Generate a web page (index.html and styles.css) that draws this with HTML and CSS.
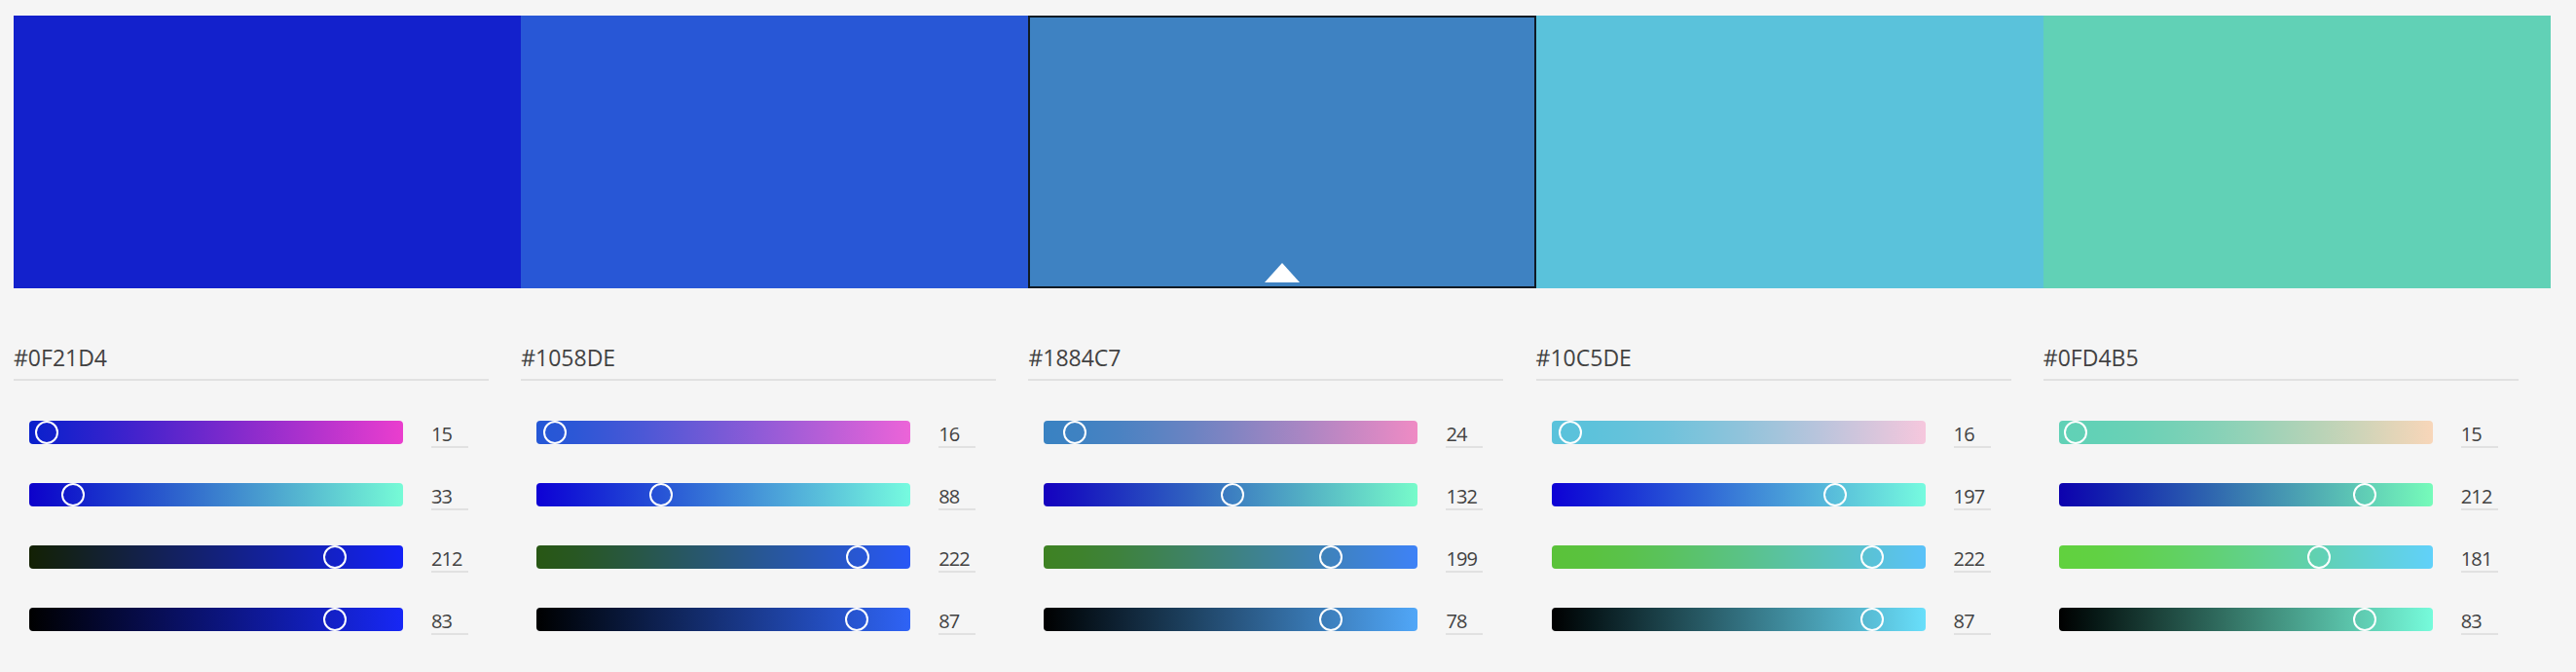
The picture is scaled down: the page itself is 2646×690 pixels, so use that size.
FILE: index.html
```html
<!DOCTYPE html>
<html lang="en">
<head>
<meta charset="utf-8">
<title>Color Wheel</title>
<link rel="stylesheet" href="styles.css">
</head>
<body>
<div class="app">
  <div class="swatches">
    <div class="swatch" data-rgb="15,33,212"></div>
    <div class="swatch" data-rgb="16,88,222"></div>
    <div class="swatch is-active" data-rgb="24,132,199"><span class="caret"></span></div>
    <div class="swatch" data-rgb="16,197,222"></div>
    <div class="swatch" data-rgb="15,212,181"></div>
  </div>

  <div class="editors">
    <div class="editor">
      <div class="hex">#0F21D4</div>
      <div class="sliders">
        <div class="slider-row">
          <div class="track" data-from="0,33,212" data-to="255,33,212"><span class="thumb" style="--f:0.0588"></span></div>
          <div class="num">15</div>
        </div>
        <div class="slider-row">
          <div class="track" data-from="15,0,212" data-to="15,255,212"><span class="thumb" style="--f:0.1294"></span></div>
          <div class="num">33</div>
        </div>
        <div class="slider-row">
          <div class="track" data-from="15,33,0" data-to="15,33,255"><span class="thumb" style="--f:0.8314"></span></div>
          <div class="num">212</div>
        </div>
        <div class="slider-row">
          <div class="track" data-from="0,0,0" data-to="18,40,255"><span class="thumb" style="--f:0.83"></span></div>
          <div class="num">83</div>
        </div>
      </div>
    </div>

    <div class="editor">
      <div class="hex">#1058DE</div>
      <div class="sliders">
        <div class="slider-row">
          <div class="track" data-from="0,88,222" data-to="255,88,222"><span class="thumb" style="--f:0.0627"></span></div>
          <div class="num">16</div>
        </div>
        <div class="slider-row">
          <div class="track" data-from="16,0,222" data-to="16,255,222"><span class="thumb" style="--f:0.3451"></span></div>
          <div class="num">88</div>
        </div>
        <div class="slider-row">
          <div class="track" data-from="16,88,0" data-to="16,88,255"><span class="thumb" style="--f:0.8706"></span></div>
          <div class="num">222</div>
        </div>
        <div class="slider-row">
          <div class="track" data-from="0,0,0" data-to="18,101,255"><span class="thumb" style="--f:0.87"></span></div>
          <div class="num">87</div>
        </div>
      </div>
    </div>

    <div class="editor">
      <div class="hex">#1884C7</div>
      <div class="sliders">
        <div class="slider-row">
          <div class="track" data-from="0,132,199" data-to="255,132,199"><span class="thumb" style="--f:0.0941"></span></div>
          <div class="num">24</div>
        </div>
        <div class="slider-row">
          <div class="track" data-from="24,0,199" data-to="24,255,199"><span class="thumb" style="--f:0.5176"></span></div>
          <div class="num">132</div>
        </div>
        <div class="slider-row">
          <div class="track" data-from="24,132,0" data-to="24,132,255"><span class="thumb" style="--f:0.7804"></span></div>
          <div class="num">199</div>
        </div>
        <div class="slider-row">
          <div class="track" data-from="0,0,0" data-to="31,169,255"><span class="thumb" style="--f:0.78"></span></div>
          <div class="num">78</div>
        </div>
      </div>
    </div>

    <div class="editor">
      <div class="hex">#10C5DE</div>
      <div class="sliders">
        <div class="slider-row">
          <div class="track" data-from="0,197,222" data-to="255,197,222"><span class="thumb" style="--f:0.0627"></span></div>
          <div class="num">16</div>
        </div>
        <div class="slider-row">
          <div class="track" data-from="16,0,222" data-to="16,255,222"><span class="thumb" style="--f:0.7725"></span></div>
          <div class="num">197</div>
        </div>
        <div class="slider-row">
          <div class="track" data-from="16,197,0" data-to="16,197,255"><span class="thumb" style="--f:0.8706"></span></div>
          <div class="num">222</div>
        </div>
        <div class="slider-row">
          <div class="track" data-from="0,0,0" data-to="18,226,255"><span class="thumb" style="--f:0.87"></span></div>
          <div class="num">87</div>
        </div>
      </div>
    </div>

    <div class="editor">
      <div class="hex">#0FD4B5</div>
      <div class="sliders">
        <div class="slider-row">
          <div class="track" data-from="0,212,181" data-to="255,212,181"><span class="thumb" style="--f:0.0588"></span></div>
          <div class="num">15</div>
        </div>
        <div class="slider-row">
          <div class="track" data-from="15,0,181" data-to="15,255,181"><span class="thumb" style="--f:0.8314"></span></div>
          <div class="num">212</div>
        </div>
        <div class="slider-row">
          <div class="track" data-from="15,212,0" data-to="15,212,255"><span class="thumb" style="--f:0.7098"></span></div>
          <div class="num">181</div>
        </div>
        <div class="slider-row">
          <div class="track" data-from="0,0,0" data-to="18,255,218"><span class="thumb" style="--f:0.83"></span></div>
          <div class="num">83</div>
        </div>
      </div>
    </div>
  </div>
</div>
<script src="app.js"></script>
</body>
</html>
```

FILE: styles.css
```css
* { box-sizing: border-box; }

body {
  margin: 0;
  background: #f5f5f5;
  font-family: "Open Sans", "Noto Sans", sans-serif;
  color: #444;
}

.app {
  padding: 16px 26px 0 14px;
}

.swatches {
  display: flex;
  height: 280px;
}

.swatch {
  flex: 1;
  position: relative;
}

.swatch.is-active {
  box-shadow: inset 0 0 0 2px #101b25;
}

.caret {
  position: absolute;
  left: 50%;
  bottom: 6px;
  width: 0;
  height: 0;
  transform: translateX(-50%);
  border-left: 18px solid transparent;
  border-right: 18px solid transparent;
  border-bottom: 20px solid #fff;
}

.editors {
  display: flex;
}

.editor {
  flex: 1;
}

.hex {
  width: 488px;
  margin-top: 56px;
  font-size: 23px;
  line-height: 30px;
  padding-bottom: 7px;
  border-bottom: 2px solid #e1e1e1;
  color: #424242;
  letter-spacing: 0;
}

.sliders {
  display: flex;
  flex-direction: column;
  gap: 36px;
  margin-top: 41px;
  padding-left: 16px;
}

.slider-row {
  display: flex;
  align-items: flex-start;
}

.track {
  position: relative;
  width: 384px;
  height: 24px;
  border-radius: 4px;
}

.thumb {
  position: absolute;
  top: 0;
  left: calc(var(--f) * 384px - 17px);
  width: 24px;
  height: 24px;
  border: 2px solid #fff;
  border-radius: 50%;
}

.num {
  margin-left: 29px;
  width: 38px;
  height: 28px;
  padding-top: 2px;
  font-size: 20px;
  line-height: 24px;
  letter-spacing: -0.9px;
  border-bottom: 2px solid #e1e1e1;
  color: #424242;
}
```

FILE: app.js
```js
(function () {
  function toLin(c) {
    c /= 255;
    return c <= 0.04045 ? c / 12.92 : Math.pow((c + 0.055) / 1.055, 2.4);
  }
  function toGam(c) {
    c = Math.max(0, Math.min(1, c));
    return c <= 0.0031308 ? 12.92 * c : 1.055 * Math.pow(c, 1 / 2.4) - 0.055;
  }
  // the reference was captured in a Display P3 context: reproduce its pixel values
  function p3(rgb) {
    var r = toLin(rgb[0]), g = toLin(rgb[1]), b = toLin(rgb[2]);
    var R = 0.8224621 * r + 0.177538 * g;
    var G = 0.0331941 * r + 0.9668058 * g;
    var B = 0.0170827 * r + 0.0723974 * g + 0.9105199 * b;
    return "rgb(" + Math.round(toGam(R) * 255) + "," + Math.round(toGam(G) * 255) + "," + Math.round(toGam(B) * 255) + ")";
  }
  function parse(s) {
    return s.split(",").map(Number);
  }

  document.querySelectorAll("[data-rgb]").forEach(function (el) {
    el.style.backgroundColor = p3(parse(el.dataset.rgb));
  });

  document.querySelectorAll(".track").forEach(function (el) {
    var a = parse(el.dataset.from), b = parse(el.dataset.to);
    var stops = [];
    var n = 10;
    for (var i = 0; i <= n; i++) {
      var t = i / n;
      var c = [0, 1, 2].map(function (k) { return a[k] + (b[k] - a[k]) * t; });
      stops.push(p3(c) + " " + (t * 100) + "%");
    }
    el.style.background = "linear-gradient(to right, " + stops.join(", ") + ")";
  });
})();
```
